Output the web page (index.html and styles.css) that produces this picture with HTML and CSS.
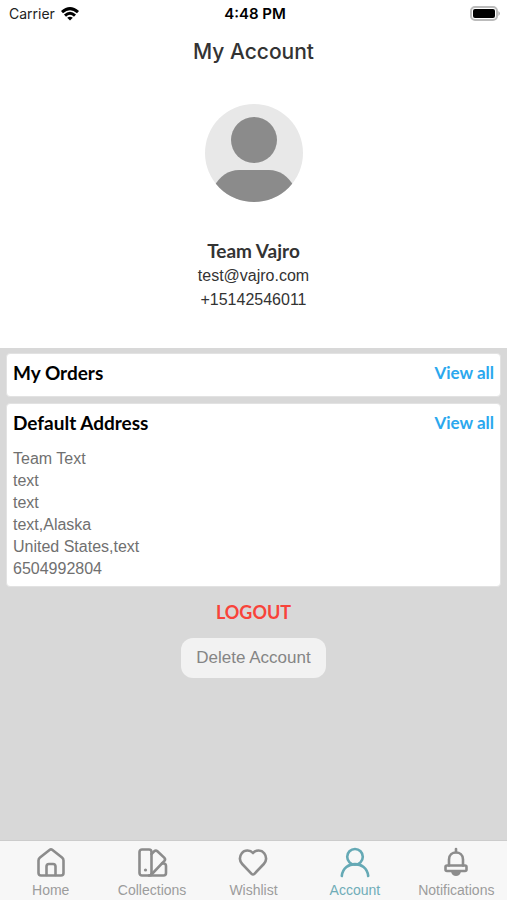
FILE: index.html
```html
<!DOCTYPE html>
<html lang="en">
<head>
    <meta charset="UTF-8">
    <meta name="viewport" content="width=device-width, initial-scale=1.0">
    <title>My Account</title>
    <link rel="stylesheet" href="styles.css">
</head>
<body>
    <div class="status-bar">
        <div class="carrier">
            <span>Carrier</span>
            <svg width="18" height="14" viewBox="0 0 18 14" fill="none" stroke="#000" stroke-width="3">
                <path d="M1 5.2 Q9 -2 17 5.2"/>
                <path d="M4 8.6 Q9 4 14 8.6"/>
                <path d="M9 13.5 L6.2 10.8 Q9 8.6 11.8 10.8 Z" fill="#000" stroke="none"/>
            </svg>
        </div>
        <span class="time">4:48 PM</span>
        <div class="battery">
            <svg width="31" height="15" viewBox="0 0 31 15">
                <rect x="1" y="1" width="26" height="13" rx="4" fill="#fff" stroke="#bbb" stroke-width="2"/>
                <rect x="3" y="3" width="22" height="9" rx="2" fill="#000"/>
                <path d="M28.5 5 Q31 7.5 28.5 10 Z" fill="#999"/>
            </svg>
        </div>
    </div>

    <header class="profile">
        <h1>My Account</h1>
        <svg class="avatar" width="98" height="98" viewBox="0 0 98 98">
            <defs>
                <clipPath id="avatarClip"><circle cx="49" cy="49" r="49"/></clipPath>
            </defs>
            <circle cx="49" cy="49" r="49" fill="#e8e8e8"/>
            <g clip-path="url(#avatarClip)" fill="#8b8b8b">
                <circle cx="49" cy="36" r="23"/>
                <path d="M8 84 Q18 66 34 66 H64 Q80 66 90 84 V98 H8 Z"/>
            </g>
        </svg>
        <h2>Team Vajro</h2>
        <p>test@vajro.com</p>
        <p>+15142546011</p>
    </header>

    <main class="content">
        <section class="card">
            <div class="card-header">
                <h3>My Orders</h3>
                <a href="#orders">View all</a>
            </div>
        </section>
        <section class="card">
            <div class="card-header">
                <h3>Default Address</h3>
                <a href="#addresses">View all</a>
            </div>
            <address>
                Team Text<br>
                text<br>
                text<br>
                text,Alaska<br>
                United States,text<br>
                6504992804
            </address>
        </section>
        <button type="button" class="logout-btn">LOGOUT</button>
        <button type="button" class="delete-btn">Delete Account</button>
    </main>

    <nav class="tab-bar">
        <a href="#home">
            <svg viewBox="0 0 32 32">
                <path d="M14.5 4 Q16 2.8 17.5 4 L27 11.5 Q28.5 12.7 28.5 14.5 V27 Q28.5 29.5 26 29.5 H6 Q3.5 29.5 3.5 27 V14.5 Q3.5 12.7 5 11.5 Z"/>
                <path d="M11.5 29 V20.5 Q11.5 18 14 18 H18 Q20.5 18 20.5 20.5 V29"/>
            </svg>
            <span>Home</span>
        </a>
        <a href="#collections">
            <svg viewBox="0 0 32 32">
                <rect x="3.5" y="3.5" width="12" height="26" rx="2.5"/>
                <path d="M15.5 8 L18.2 5.3 Q19.8 3.8 21.4 5.3 L28.2 11.6 Q29.8 13.2 28.4 14.8 L15 29"/>
                <path d="M26 17.5 H27.5 Q30 17.5 30 20 V27 Q30 29.5 27.5 29.5 H13"/>
                <circle class="dot" cx="9.5" cy="24" r="1.6"/>
            </svg>
            <span>Collections</span>
        </a>
        <a href="#wishlist">
            <svg viewBox="0 0 32 32">
                <path d="M16 7 C13 3.5 7.5 3.8 4.8 7.2 C2.1 10.6 2.4 15.2 5.2 18 L14.6 27.8 Q16 29.2 17.4 27.8 L26.8 18 C29.6 15.2 29.9 10.6 27.2 7.2 C24.5 3.8 19 3.5 16 7 Z"/>
            </svg>
            <span>Wishlist</span>
        </a>
        <a href="#account" class="active">
            <svg viewBox="0 0 32 32">
                <circle cx="16" cy="10.8" r="7.8"/>
                <path d="M2.8 30 C4.5 14.2 27.5 14.2 29.2 30"/>
            </svg>
            <span>Account</span>
        </a>
        <a href="#notifications">
            <svg viewBox="0 0 32 32">
                <path d="M16 3 V6"/>
                <path d="M9 19.5 V13.5 C9 4.2 23 4.2 23 13.5 V19.5"/>
                <rect x="5.5" y="19.5" width="21" height="5.5" rx="1.5"/>
                <path class="dot" d="M11 25.5 C12 31.5 20 31.5 21 25.5 Z"/>
            </svg>
            <span>Notifications</span>
        </a>
    </nav>
</body>
</html>
```
FILE: styles.css
```css
* {
    box-sizing: border-box;
}

body {
    margin: 0;
    min-height: 100vh;
    display: flex;
    flex-direction: column;
    font-family: "Liberation Sans", Arial, sans-serif;
    background: #fff;
    color: #333;
}

h1, h2, h3, p {
    margin: 0;
    font-weight: normal;
}

a {
    text-decoration: none;
}

/* Status bar */
.status-bar {
    display: grid;
    grid-template-columns: 1fr auto 1fr;
    align-items: center;
    height: 27px;
    padding: 0 6px 0 9px;
    font-family: Inter, sans-serif;
    font-size: 14px;
    color: #222;
}

.carrier {
    display: flex;
    align-items: center;
    gap: 6px;
}

.time {
    font-size: 15px;
    font-weight: 600;
    color: #000;
}

.battery {
    display: flex;
    justify-content: flex-end;
}

/* Profile */
.profile {
    display: flex;
    flex-direction: column;
    align-items: center;
    padding: 9px 0 36px;
    font-size: 16px;
    line-height: 24px;
}

.profile h1 {
    font-family: Inter, sans-serif;
    font-size: 21px;
    font-weight: 500;
    line-height: 32px;
}

.avatar {
    margin: 36px 0;
}

.profile h2 {
    font-family: Lato, sans-serif;
    font-size: 19px;
    font-weight: bold;
    line-height: 26px;
}

/* Cards */
.content {
    flex: 1;
    display: flex;
    flex-direction: column;
    gap: 6px;
    padding: 5px 6px;
    background: #d8d8d8;
}

.card {
    padding: 4px 6px 6px;
    border-radius: 4px;
    background: #fff;
    border: 1px solid #e2e2e2;
}

.card-header {
    display: flex;
    justify-content: space-between;
    align-items: center;
    height: 28px;
    margin-bottom: 4px;
    font-family: Lato, sans-serif;
    font-weight: bold;
}

.card-header h3 {
    font-size: 19px;
    font-weight: bold;
    color: #000;
}

.card-header a {
    font-size: 17px;
    color: #2ba8ee;
}

.card address {
    padding: 8px 0 0;
    font-size: 16px;
    font-style: normal;
    line-height: 22px;
    color: #707070;
}

/* Buttons */
.logout-btn, .delete-btn {
    align-self: center;
    border: none;
    cursor: pointer;
}

.logout-btn {
    padding: 7px 12px 8px;
    background: none;
    font-family: Lato, sans-serif;
    font-size: 18px;
    font-weight: bold;
    line-height: 24px;
    color: #f8433a;
}

.delete-btn {
    padding: 8px 15px;
    border-radius: 12px;
    background: #f2f2f2;
    font-family: "Liberation Sans", Arial, sans-serif;
    font-size: 17px;
    line-height: 24px;
    color: #858585;
}

/* Bottom tabs */
.tab-bar {
    display: grid;
    grid-template-columns: repeat(5, 1fr);
    height: 60px;
    border-top: 1px solid #ccc;
    background: #f7f7f7;
}

.tab-bar a {
    display: flex;
    flex-direction: column;
    align-items: center;
    padding-top: 5px;
    font-size: 14px;
    line-height: 25px;
    color: #9c9c9c;
}

.tab-bar svg {
    width: 32px;
    height: 32px;
    fill: none;
    stroke: #8c8c8c;
    stroke-width: 2.6;
    stroke-linecap: round;
    stroke-linejoin: round;
}

.tab-bar .dot {
    fill: #8c8c8c;
    stroke: none;
}

.tab-bar .active {
    color: #70adb8;
}

.tab-bar .active svg {
    stroke: #65a9b5;
}
```
